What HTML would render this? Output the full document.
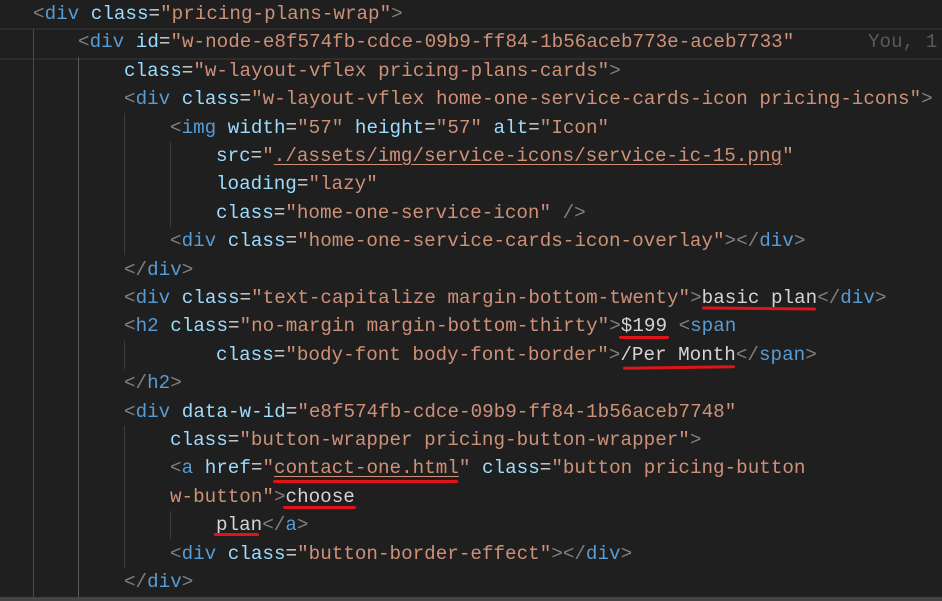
<!DOCTYPE html>
<html><head><meta charset="utf-8"><style>
html,body{margin:0;padding:0;background:#1f1f1f;width:942px;height:601px;overflow:hidden;}
.l{position:absolute;left:0;height:28.4px;line-height:28.4px;white-space:pre;font-family:"Liberation Mono",monospace;font-size:19.25px;color:#d4d4d4;}
.t{color:#569cd6}.a{color:#9cdcfe}.s{color:#ce9178}.p{color:#808080}.w{color:#d4d4d4}
.g{position:absolute;width:1px;background:#3c3c3c;}
.u{position:absolute;height:3px;background:#e0141a;border-radius:2px;}
.lk{text-decoration:underline;text-underline-offset:3px;}
</style></head><body>
<div style="position:absolute;left:0;right:0;top:28px;height:28px;border-top:2px solid #2c2c2c;border-bottom:2px solid #2c2c2c;"></div>
<div class="g" style="left:33px;top:29px;height:568px;background:#4a4a4a"></div>
<div class="g" style="left:78px;top:57px;height:540px;background:#5a5a5a"></div>
<div class="g" style="left:124px;top:113px;height:142px"></div>
<div class="g" style="left:124px;top:341px;height:28px"></div>
<div class="g" style="left:124px;top:426px;height:142px"></div>
<div class="g" style="left:170px;top:142px;height:85px"></div>
<div class="g" style="left:170px;top:511px;height:28px"></div>

<div class="l" style="top:0px;left:33px"><span class="p">&lt;</span><span class="t">div</span> <span class="a">class</span><span class="w">=</span><span class="s">"pricing-plans-wrap"</span><span class="p">&gt;</span></div>
<div class="l" style="top:28.4px;left:78px"><span class="p">&lt;</span><span class="t">div</span> <span class="a">id</span><span class="w">=</span><span class="s">"w-node-e8f574fb-cdce-09b9-ff84-1b56aceb773e-aceb7733"</span></div>
<div class="l" style="top:28.4px;left:868px;color:#5a5a5a">You, 1</div>
<div class="l" style="top:56.8px;left:124px"><span class="a">class</span><span class="w">=</span><span class="s">"w-layout-vflex pricing-plans-cards"</span><span class="p">&gt;</span></div>
<div class="l" style="top:85.2px;left:124px"><span class="p">&lt;</span><span class="t">div</span> <span class="a">class</span><span class="w">=</span><span class="s">"w-layout-vflex home-one-service-cards-icon pricing-icons"</span><span class="p">&gt;</span></div>
<div class="l" style="top:113.6px;left:170px"><span class="p">&lt;</span><span class="t">img</span> <span class="a">width</span><span class="w">=</span><span class="s">"57"</span> <span class="a">height</span><span class="w">=</span><span class="s">"57"</span> <span class="a">alt</span><span class="w">=</span><span class="s">"Icon"</span></div>
<div class="l" style="top:142px;left:216px"><span class="a">src</span><span class="w">=</span><span class="s">"<span class="lk">./assets/img/service-icons/service-ic-15.png</span>"</span></div>
<div class="l" style="top:170.4px;left:216px"><span class="a">loading</span><span class="w">=</span><span class="s">"lazy"</span></div>
<div class="l" style="top:198.8px;left:216px"><span class="a">class</span><span class="w">=</span><span class="s">"home-one-service-icon"</span> <span class="p">/&gt;</span></div>
<div class="l" style="top:227.2px;left:170px"><span class="p">&lt;</span><span class="t">div</span> <span class="a">class</span><span class="w">=</span><span class="s">"home-one-service-cards-icon-overlay"</span><span class="p">&gt;&lt;/</span><span class="t">div</span><span class="p">&gt;</span></div>
<div class="l" style="top:255.6px;left:124px"><span class="p">&lt;/</span><span class="t">div</span><span class="p">&gt;</span></div>
<div class="l" style="top:284px;left:124px"><span class="p">&lt;</span><span class="t">div</span> <span class="a">class</span><span class="w">=</span><span class="s">"text-capitalize margin-bottom-twenty"</span><span class="p">&gt;</span>basic plan<span class="p">&lt;/</span><span class="t">div</span><span class="p">&gt;</span></div>
<div class="l" style="top:312.4px;left:124px"><span class="p">&lt;</span><span class="t">h2</span> <span class="a">class</span><span class="w">=</span><span class="s">"no-margin margin-bottom-thirty"</span><span class="p">&gt;</span>$199 <span class="p">&lt;</span><span class="t">span</span></div>
<div class="l" style="top:340.8px;left:216px"><span class="a">class</span><span class="w">=</span><span class="s">"body-font body-font-border"</span><span class="p">&gt;</span>/Per Month<span class="p">&lt;/</span><span class="t">span</span><span class="p">&gt;</span></div>
<div class="l" style="top:369.2px;left:124px"><span class="p">&lt;/</span><span class="t">h2</span><span class="p">&gt;</span></div>
<div class="l" style="top:397.6px;left:124px"><span class="p">&lt;</span><span class="t">div</span> <span class="a">data-w-id</span><span class="w">=</span><span class="s">"e8f574fb-cdce-09b9-ff84-1b56aceb7748"</span></div>
<div class="l" style="top:426px;left:170px"><span class="a">class</span><span class="w">=</span><span class="s">"button-wrapper pricing-button-wrapper"</span><span class="p">&gt;</span></div>
<div class="l" style="top:454.4px;left:170px"><span class="p">&lt;</span><span class="t">a</span> <span class="a">href</span><span class="w">=</span><span class="s">"<span class="lk">contact-one.html</span>"</span> <span class="a">class</span><span class="w">=</span><span class="s">"button pricing-button</span></div>
<div class="l" style="top:482.8px;left:170px"><span class="s">w-button"</span><span class="p">&gt;</span>choose</div>
<div class="l" style="top:511.2px;left:216px">plan<span class="p">&lt;/</span><span class="t">a</span><span class="p">&gt;</span></div>
<div class="l" style="top:539.6px;left:170px"><span class="p">&lt;</span><span class="t">div</span> <span class="a">class</span><span class="w">=</span><span class="s">"button-border-effect"</span><span class="p">&gt;&lt;/</span><span class="t">div</span><span class="p">&gt;</span></div>
<div class="l" style="top:568px;left:124px"><span class="p">&lt;/</span><span class="t">div</span><span class="p">&gt;</span></div>

<div class="u" style="left:702px;top:307px;width:114px;transform:rotate(0.5deg)"></div>
<div class="u" style="left:619px;top:336px;width:50px"></div>
<div class="u" style="left:623px;top:366px;width:112px;transform:rotate(-0.8deg)"></div>
<div class="u" style="left:273px;top:480px;width:185px"></div>
<div class="u" style="left:283px;top:506px;width:73px"></div>
<div class="u" style="left:214px;top:533px;width:45px"></div>

<div style="position:absolute;left:0;right:0;top:597px;height:4px;background:#444"></div>
</body></html>
